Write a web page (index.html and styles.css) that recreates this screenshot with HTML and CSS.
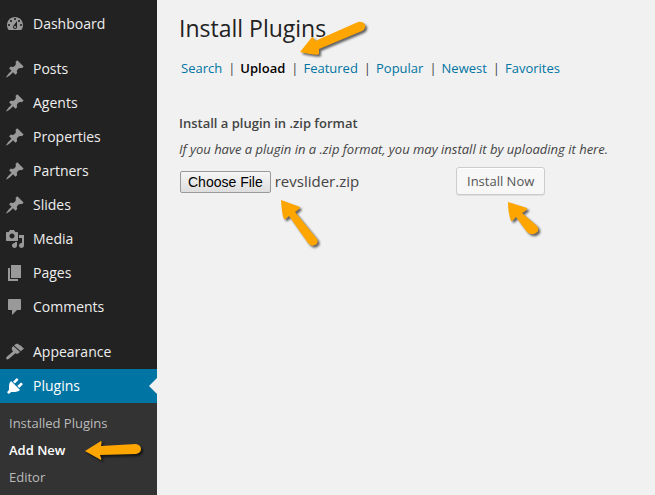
FILE: index.html
```html
<!DOCTYPE html>
<html lang="en">
<head>
<meta charset="utf-8">
<title>Install Plugins</title>
<link rel="stylesheet" href="styles.css">
</head>
<body>
<svg class="defs" aria-hidden="true">
  <symbol id="pin" viewBox="0 0 20 20"><path d="M10.44 3.02l1.82-1.82 6.36 6.35-1.83 1.82c-1.05-.68-2.48-.57-3.41.36l-.75.75c-.92.93-1.04 2.35-.35 3.41l-1.83 1.82-2.41-2.41-2.8 2.79c-.42.42-3.38 2.71-3.8 2.29s1.86-3.39 2.28-3.81l2.79-2.79L4.1 9.36l1.83-1.82c1.05.69 2.48.57 3.4-.36l.75-.75c.93-.92 1.05-2.35.36-3.41z"/></symbol>
</svg>
<div class="layout">
  <nav class="sidebar" aria-label="Main menu">
    <ul class="menu">
      <li><a class="menu-link" href="#"><svg class="icon" viewBox="0 0 20 20"><path d="M3.76 16h12.48c1.1-1.37 1.76-3.11 1.76-5 0-4.42-3.58-8-8-8s-8 3.58-8 8c0 1.89.66 3.63 1.76 5zM10 4c.55 0 1 .45 1 1s-.45 1-1 1-1-.45-1-1 .45-1 1-1zM6 6c.55 0 1 .45 1 1s-.45 1-1 1-1-.45-1-1 .45-1 1-1zm8 0c.55 0 1 .45 1 1s-.45 1-1 1-1-.45-1-1 .45-1 1-1zm-5.37 5.55L12 7v6c0 1.1-.9 2-2 2s-2-.9-2-2c0-.57.24-1.08.63-1.45zM4 10c.55 0 1 .45 1 1s-.45 1-1 1-1-.45-1-1 .45-1 1-1zm12 0c.55 0 1 .45 1 1s-.45 1-1 1-1-.45-1-1 .45-1 1-1zm-5 3c0-.55-.45-1-1-1s-1 .45-1 1 .45 1 1 1 1-.45 1-1z"/></svg>Dashboard</a></li>
    </ul>
    <ul class="menu">
      <li><a class="menu-link" href="#"><svg class="icon"><use href="#pin"/></svg>Posts</a></li>
      <li><a class="menu-link" href="#"><svg class="icon"><use href="#pin"/></svg>Agents</a></li>
      <li><a class="menu-link" href="#"><svg class="icon"><use href="#pin"/></svg>Properties</a></li>
      <li><a class="menu-link" href="#"><svg class="icon"><use href="#pin"/></svg>Partners</a></li>
      <li><a class="menu-link" href="#"><svg class="icon"><use href="#pin"/></svg>Slides</a></li>
      <li><a class="menu-link" href="#"><svg class="icon" viewBox="0 0 20 20"><path d="M13 11V4c0-.55-.45-1-1-1h-1.67L9 1H5L3.67 3H2c-.55 0-1 .45-1 1v7c0 .55.45 1 1 1h10c.55 0 1-.45 1-1zM7 4.5c1.38 0 2.5 1.12 2.5 2.5S8.38 9.5 7 9.5 4.5 8.38 4.5 7 5.62 4.5 7 4.5zM14 6h5v10.5c0 1.38-1.12 2.5-2.5 2.5S14 17.88 14 16.5s1.12-2.5 2.5-2.5c.17 0 .34.02.5.05V9h-3V6zm-4 8.05V13h2v3.5c0 1.38-1.12 2.5-2.5 2.5S7 17.88 7 16.5 8.12 14 9.5 14c.17 0 .34.02.5.05z"/></svg>Media</a></li>
      <li><a class="menu-link" href="#"><svg class="icon" viewBox="0 0 20 20"><path d="M6 15V2h10v13H6zm-1 1h8v2H3V5h2v11z"/></svg>Pages</a></li>
      <li><a class="menu-link" href="#"><svg class="icon" viewBox="0 0 20 20"><path d="M4 2h11c.55 0 1 .45 1 1v9c0 .55-.45 1-1 1h-3l-5 5v-5H4c-.55 0-1-.45-1-1V3c0-.55.45-1 1-1z"/></svg>Comments</a></li>
    </ul>
    <ul class="menu">
      <li><a class="menu-link" href="#"><svg class="icon" viewBox="0 0 20 20"><path d="M10 2.6L12.6 1.6L15 3.6L16 3.4L16.8 4.8L19 6.6L15.8 9.2L9.2 3.4ZM8.4 4L15 10L13.2 11.6Q11.6 12.2 10.4 11.2L4 16.8Q2.2 18 1.3 16.8Q.6 15.5 2 14.4L8 9.4Q6.4 7.6 6.8 6Q7 4.8 8.4 4Z"/></svg>Appearance</a></li>
      <li><a class="menu-link current" href="#"><svg class="icon" viewBox="0 0 20 20"><path d="M13.11 4.36L9.87 7.6 8 5.73l3.24-3.24c.35-.34 1.05-.2 1.56.32.52.51.66 1.21.31 1.55zm-8 1.77l.91-1.12 9.01 9.01-1.19.84c-.71.71-2.63 1.16-3.82 1.16H6.14L4.9 17.26c-.59.59-1.54.59-2.12 0-.59-.58-.59-1.53 0-2.12l1.24-1.24v-3.88c0-1.13.4-3.19 1.09-3.89zm7.26 3.97l3.24-3.24c.34-.35 1.04-.21 1.55.31.52.51.66 1.21.31 1.55l-3.24 3.25z"/></svg>Plugins</a>
        <ul class="submenu">
          <li><a href="#">Installed Plugins</a></li>
          <li class="has-arrow"><a class="active" href="#" aria-current="page">Add New</a><svg class="arrow arrow-add" viewBox="0 0 58 22"><path d="M1 11L17 1Q18 1 17 6L52 4Q57 5 57 9Q57 13 52 14L16 15Q18 20 17 20Z"/></svg></li>
          <li><a href="#">Editor</a></li>
        </ul>
      </li>
    </ul>
  </nav>
  <main class="content">
    <h1>Install Plugins</h1>
    <ul class="tabs">
      <li><a href="#">Search</a></li>
      <li class="has-arrow"><a class="active" href="#">Upload</a><svg class="arrow arrow-upload" viewBox="0 0 68 36"><path d="M1 31L13 16Q15 16 16 20L59 1Q64 0 66 4Q67 8 63 10L20 28L20 33Q19 35 1 31Z"/></svg></li>
      <li><a href="#">Featured</a></li>
      <li><a href="#">Popular</a></li>
      <li><a href="#">Newest</a></li>
      <li><a href="#">Favorites</a></li>
    </ul>
    <h2>Install a plugin in .zip format</h2>
    <p class="help">If you have a plugin in a .zip format, you may install it by uploading it here.</p>
    <form class="upload">
      <div class="has-arrow">
        <input type="file" id="pluginzip" class="file" aria-label="Plugin zip file">
        <svg class="arrow arrow-file" viewBox="0 0 42 50"><path d="M1 1L20 8Q20 10 15 13L37 40Q39 44 35 46Q31 48 28 44L9 17Q5 21 4 20Q2 17 1 1Z"/></svg>
      </div>
      <div class="has-arrow">
        <button type="button" class="button">Install Now</button>
        <svg class="arrow arrow-install" viewBox="0 0 34 36"><path d="M1 1L20 7Q21 9 15 12L30 25Q33 30 29 32Q25 35 20 31L9 16Q6 20 4 20Q1 12 1 1Z"/></svg>
      </div>
    </form>
  </main>
</div>
<script src="script.js"></script>
</body>
</html>
```
FILE: styles.css
```css
* { box-sizing: border-box; }
body {
  margin: 0;
  background: #f1f1f1;
  color: #444;
  font: 13px/18px "Open Sans", sans-serif;
}
ul { list-style: none; margin: 0; padding: 0; }
a { color: #0074a2; text-decoration: none; }
.defs { display: none; }
.layout { display: flex; min-height: 100vh; }

.sidebar {
  display: flex;
  flex-direction: column;
  gap: 11px;
  flex: 0 0 157px;
  padding-top: 7px;
  background: #222;
}
.menu-link {
  display: flex;
  align-items: center;
  gap: 8px;
  height: 34px;
  padding-left: 5px;
  color: #eee;
  font-size: 14px;
}
.icon { width: 20px; height: 20px; fill: #999; }
.current { position: relative; background: #0074a2; color: #fff; }
.current .icon { fill: #fff; }
.current::after {
  content: "";
  position: absolute;
  right: 0;
  top: 9px;
  border: 8px solid transparent;
  border-left: 0;
  border-right-color: #f1f1f1;
}
.menu:last-child { flex: 1; display: flex; flex-direction: column; }
.menu:last-child > li:last-child { flex: 1; display: flex; flex-direction: column; }
.submenu { flex: 1; padding-top: 6px; background: #333; }
.submenu a { display: block; padding: 5px 9px 4px; color: #bbb; }
.submenu .active { color: #fff; font-weight: 600; }

.content { flex: 1; padding: 12px 22px; }
h1 { margin: 0; color: #222; font-size: 23px; font-weight: 400; line-height: 32px; }
.tabs { display: flex; margin: 15px 0 37px 2px; }
.tabs li:not(:last-child)::after { content: "|"; margin: 0 5px 0 6px; }
.tabs .active { color: #000; font-weight: 600; }
h2 { margin: 0 0 8px; font-size: 13px; font-weight: 600; line-height: 18px; }
.help { margin: 0; font-style: italic; }
.upload { display: flex; align-items: flex-start; padding: 9px 0 0; }
.file {
  display: block;
  width: 277px;
  padding: 4px 1px;
  color: #444;
  font: 15px/20px "Open Sans", sans-serif;
}
.file::file-selector-button {
  height: 22px;
  margin: 0 4px 0 0;
  padding: 0 7px;
  border: 1px solid #999;
  border-radius: 2px;
  background: linear-gradient(#f6f6f6, #dedede);
  color: #000;
  font: 14px/20px "Liberation Sans", sans-serif;
}
.button {
  display: block;
  height: 28px;
  padding: 0 10px;
  border: 1px solid #ccc;
  border-radius: 3px;
  background: #f7f7f7;
  box-shadow: inset 0 1px 0 #fff, 0 1px 0 rgba(0, 0, 0, .08);
  color: #555;
  font: 13px/26px "Open Sans", sans-serif;
}

.has-arrow { position: relative; }
.arrow {
  position: absolute;
  fill: #ffa500;
  overflow: visible;
  pointer-events: none;
  filter: drop-shadow(2px 2px 1px rgba(0, 0, 0, .6));
}
.arrow-add { left: 84px; top: 4px; width: 58px; height: 22px; }
.arrow-upload { left: 59px; top: -38px; width: 68px; height: 36px; }
.arrow-file { left: 101px; top: 32px; width: 42px; height: 50px; }
.arrow-install { left: 51px; top: 34px; width: 34px; height: 36px; }
```
FILE: script.js
```js
// Preselect the plugin archive in the upload field.
const selection = new DataTransfer();
selection.items.add(new File([""], "revslider.zip", { type: "application/zip" }));
document.getElementById("pluginzip").files = selection.files;
```
